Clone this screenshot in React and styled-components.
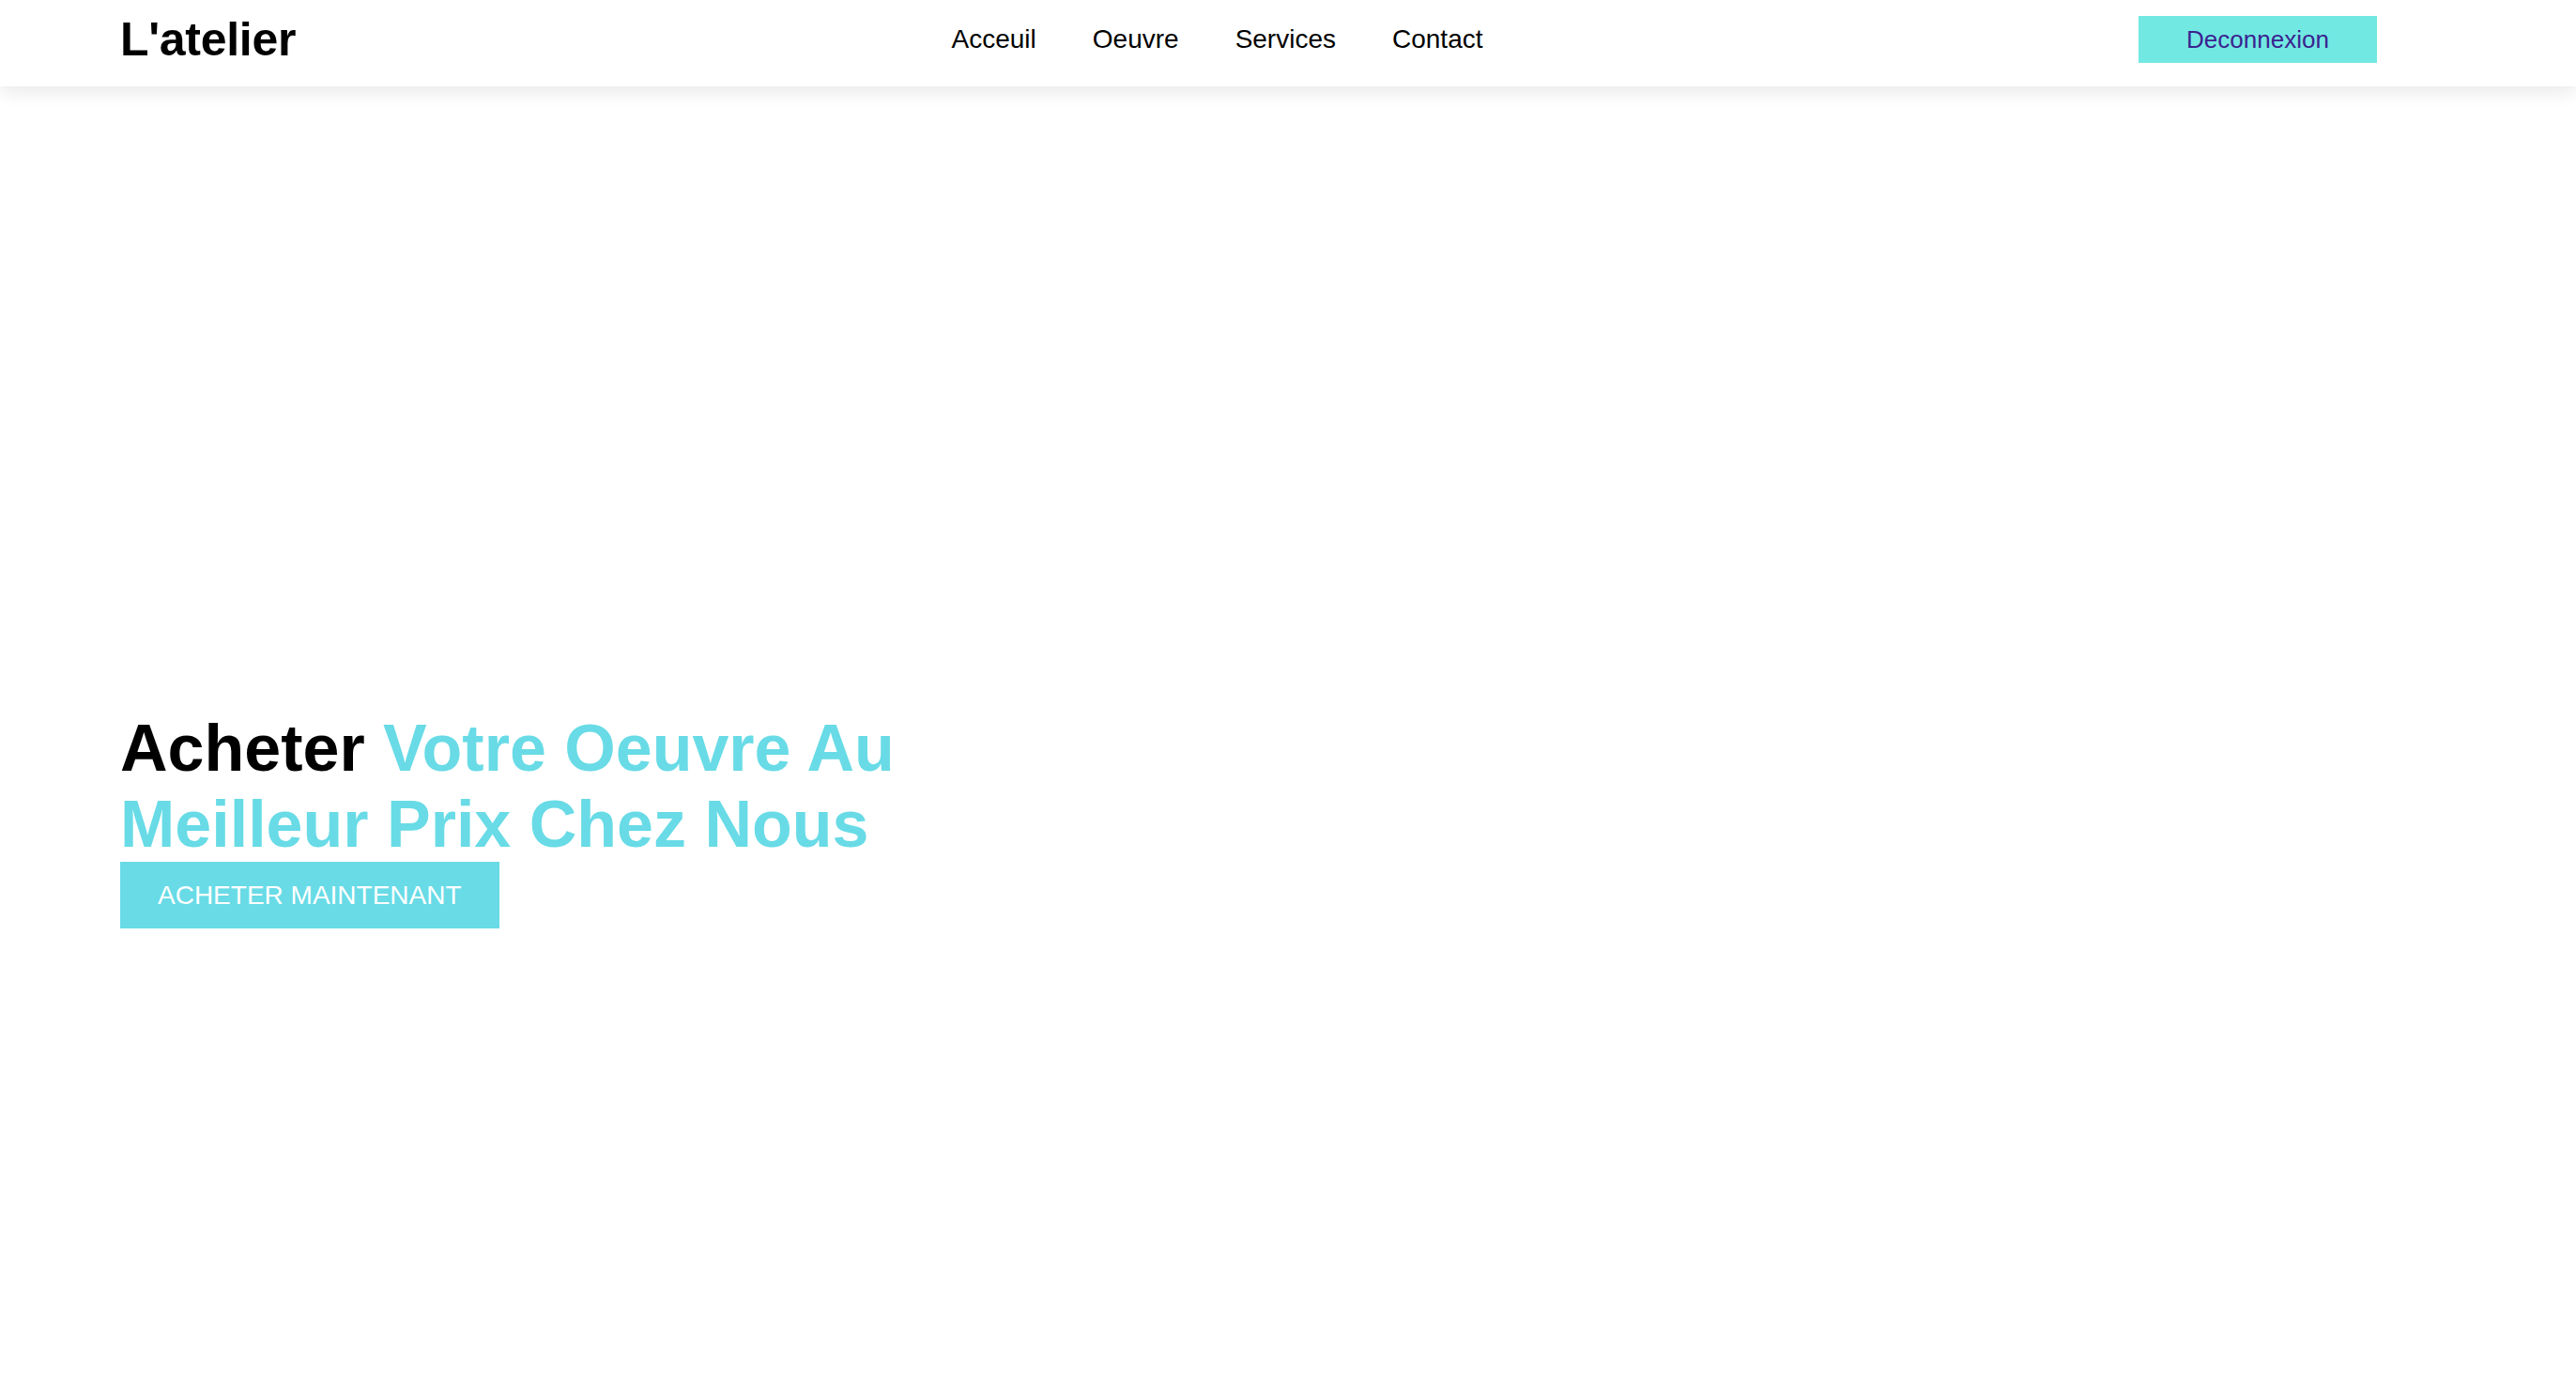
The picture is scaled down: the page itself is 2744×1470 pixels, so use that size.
import styled, { createGlobalStyle } from 'styled-components';

const GlobalStyle = createGlobalStyle`
  * { box-sizing: border-box; }
  body {
    margin: 0;
    background: #fff;
    font-family: "Liberation Sans", Arial, Helvetica, sans-serif;
  }
`;

const HeaderBar = styled.header`
  height: 92px;
  padding: 0 212px 8px 128px;
  display: flex;
  align-items: center;
  justify-content: space-between;
  background: #fff;
  box-shadow: 0 6px 18px rgba(0, 0, 0, 0.09);
  position: relative;
`;

const Brand = styled.a`
  font-size: 50px;
  font-weight: 700;
  color: #000;
  text-decoration: none;
  letter-spacing: -0.3px;
`;

const Nav = styled.nav`
  display: flex;
  align-items: center;
  gap: 60px;
`;

const NavLink = styled.a`
  font-size: 28px;
  color: #000;
  text-decoration: none;
`;

const LogoutButton = styled.button`
  width: 254px;
  height: 50px;
  border: none;
  background: #72e8e2;
  color: #3a238f;
  font-family: inherit;
  font-size: 26px;
  cursor: pointer;
`;

const Hero = styled.section`
  padding: 665px 128px 0;
  min-height: 1378px;
  display: flex;
  flex-direction: column;
  align-items: flex-start;
`;

const Title = styled.h1`
  margin: 0;
  max-width: 1000px;
  font-size: 70px;
  font-weight: 700;
  line-height: 1.15;
  color: #000;
`;

const Accent = styled.span`
  color: #68dbe6;
`;

const BuyButton = styled.button`
  border: none;
  background: #68dbe6;
  color: #fff;
  font-family: inherit;
  font-size: 28px;
  padding: 0 40px;
  height: 71px;
  text-transform: uppercase;
  cursor: pointer;
`;

export default function App() {
  return (
    <>
      <GlobalStyle />
      <HeaderBar>
        <Brand href="#">L'atelier</Brand>
        <Nav>
          <NavLink href="#">Acceuil</NavLink>
          <NavLink href="#">Oeuvre</NavLink>
          <NavLink href="#">Services</NavLink>
          <NavLink href="#">Contact</NavLink>
        </Nav>
        <LogoutButton>Deconnexion</LogoutButton>
      </HeaderBar>
      <Hero>
        <Title>
          Acheter <Accent>Votre Oeuvre Au Meilleur Prix Chez Nous</Accent>
        </Title>
        <BuyButton>Acheter maintenant</BuyButton>
      </Hero>
    </>
  );
}
